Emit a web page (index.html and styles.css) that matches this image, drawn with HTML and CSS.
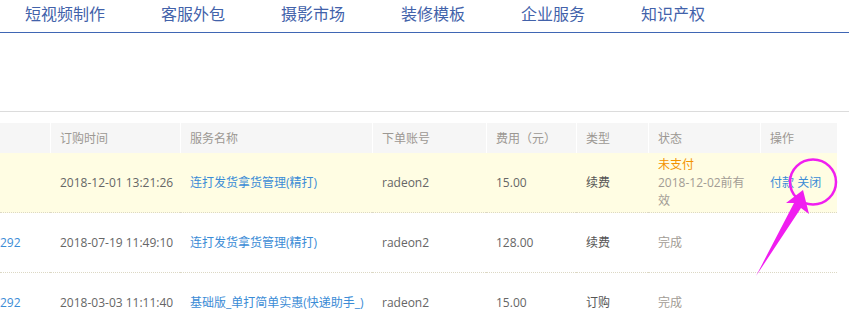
FILE: index.html
```html
<!DOCTYPE html>
<html>
  <head>
    <meta charset="utf-8">
    <title>订购记录</title>
    <link rel="stylesheet" href="styles.css">
  </head>
  <body>
    <ul class="nav">
      <li>短视频制作</li>
      <li>客服外包</li>
      <li>摄影市场</li>
      <li>装修模板</li>
      <li>企业服务</li>
      <li>知识产权</li>
    </ul>
    <div class="divider"></div>

    <table class="orders">
      <thead>
        <tr>
          <th class="c-no"></th>
          <th class="c-time">订购时间</th>
          <th class="c-name">服务名称</th>
          <th class="c-user">下单账号</th>
          <th class="c-fee">费用（元）</th>
          <th class="c-type">类型</th>
          <th class="c-state">状态</th>
          <th class="c-op">操作</th>
        </tr>
      </thead>
      <tbody>
        <tr class="unpaid">
          <td class="c-no"></td>
          <td class="c-time">2018-12-01 13:21:26</td>
          <td class="c-name"><a href="#">连打发货拿货管理(精打)</a></td>
          <td>radeon2</td>
          <td>15.00</td>
          <td class="type">续费</td>
          <td class="c-state"><div class="warn">未支付</div><div class="state">2018-12-02前有效</div></td>
          <td class="c-op"><a href="#">付款</a> <a href="#">关闭</a></td>
        </tr>
        <tr>
          <td class="c-no"><a href="#">292</a></td>
          <td class="c-time">2018-07-19 11:49:10</td>
          <td class="c-name"><a href="#">连打发货拿货管理(精打)</a></td>
          <td>radeon2</td>
          <td>128.00</td>
          <td class="type">续费</td>
          <td class="c-state"><div class="state">完成</div></td>
          <td class="c-op"></td>
        </tr>
        <tr>
          <td class="c-no"><a href="#">292</a></td>
          <td class="c-time">2018-03-03 11:11:40</td>
          <td class="c-name"><a href="#">基础版_单打简单实惠(快递助手_)</a></td>
          <td>radeon2</td>
          <td>15.00</td>
          <td class="type">订购</td>
          <td class="c-state"><div class="state">完成</div></td>
          <td class="c-op"></td>
        </tr>
      </tbody>
    </table>

    <svg class="mark" width="849" height="315" viewBox="0 0 849 315">
      <ellipse cx="813" cy="182" rx="23" ry="22.5" fill="none" stroke="#f01ef0" stroke-width="2.5"/>
      <polygon points="803,190 809,214 801,208 756,276 794,203 786,203" fill="#f01ef0"/>
    </svg>
  </body>
</html>
```
FILE: styles.css
```css
html,
body {
  margin: 0;
  background: #fff;
  font-family: "Open Sans", "Noto Sans CJK SC", sans-serif;
  font-size: 12px;
  color: #666;
}
body {
  position: relative;
  width: 849px;
  height: 315px;
  overflow: hidden;
}
a {
  color: #3b8cd6;
  text-decoration: none;
}

/* top nav */
.nav {
  display: flex;
  gap: 56px;
  height: 32px;
  margin: 0;
  padding: 0 0 0 25px;
  list-style: none;
  border-bottom: 1px solid #3f66b4;
  font-family: "Noto Sans CJK SC", sans-serif;
  font-size: 16px;
  line-height: 26px;
  color: #4262aa;
}
.divider {
  margin-top: 78px;
  border-top: 1px solid #dcdcdc;
}

/* order table */
.orders {
  width: 837px;
  margin-top: 11px;
  border-collapse: collapse;
  table-layout: fixed;
}
.orders th {
  height: 30px;
  padding: 0 10px;
  background: #f6f6f6;
  box-shadow: inset 1px 0 #fff;
  text-align: left;
  font-weight: normal;
  color: #9c9893;
}
.orders th:first-child { box-shadow: none; }
.orders td {
  height: 59px;
  padding: 0 10px;
  border-bottom: 1px dotted #dcd8c4;
  line-height: 18px;
  white-space: nowrap;
}
.orders tr.unpaid td { background: #fffde3; }
.orders .c-no { width: 50px; padding: 0; }
.orders .c-time { width: 110px; }
.orders .c-name { width: 172px; }
.orders .c-user { width: 94px; }
.orders .c-fee { width: 70px; }
.orders .c-type { width: 52px; }
.orders .c-state { width: 92px; white-space: normal; }
.orders .c-op { width: 57px; }
.type { color: #555; }
.warn { color: #f39200; }
.state { color: #a29c95; }

/* annotation drawn over the screenshot */
.mark {
  position: absolute;
  top: 0;
  left: 0;
  pointer-events: none;
}
```
